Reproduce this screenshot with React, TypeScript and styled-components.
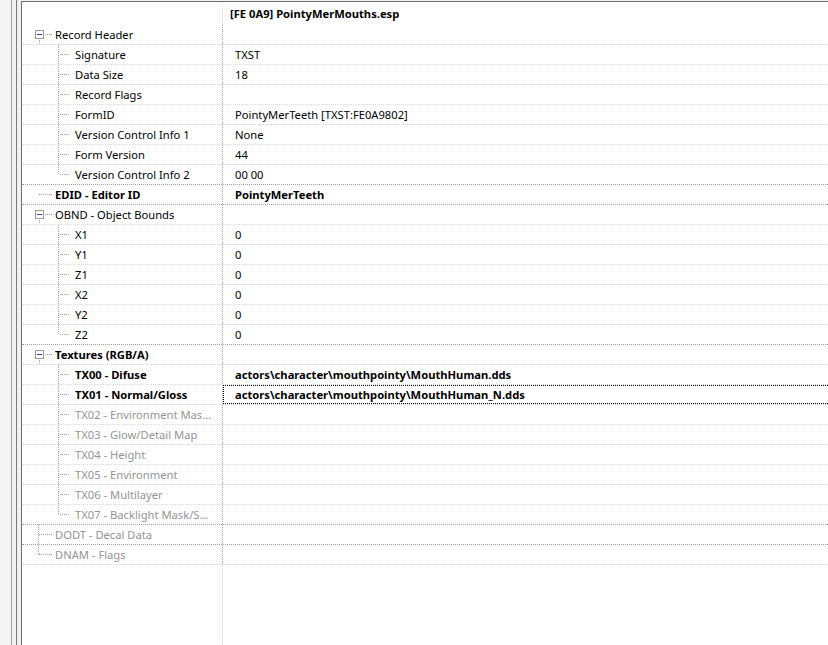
import React from 'react'
import styled, { createGlobalStyle } from 'styled-components'

const GlobalStyle = createGlobalStyle`
  html, body {
    margin: 0;
    padding: 0;
    height: 100%;
    overflow: hidden;
    background: #f0f0f0;
  }
  #root {
    height: 100%;
  }
`

// a little wider than the window: the grid runs off the right edge
const AppWrapper = styled.div`
  display: flex;
  height: 645px;
  width: 832px;
  font-family: 'Noto Sans', 'Open Sans', sans-serif;
  font-size: 11.2px;
  color: #000;
`

// splitter strip on the left edge
const Gutter = styled.div`
  display: flex;
  flex-shrink: 0;
  width: 21px;
  background: #f0f0f0;
`

const GutterPart = styled.div<{ $w: number; $c: string }>`
  width: ${({ $w }) => $w}px;
  background: ${({ $c }) => $c};
`

const Panel = styled.div`
  flex: 1;
  display: flex;
  flex-direction: column;
  margin-top: 1px;
  background: #fff;
  border-left: 1px solid #6e6e6e;
  border-top: 1px solid #6e6e6e;
  overflow: hidden;
`

const HeaderRow = styled.div`
  display: flex;
  height: 23px;
  flex-shrink: 0;
`

const Row = styled.div<{ $sep: 'light' | 'dark' }>`
  display: flex;
  height: 20px;
  flex-shrink: 0;
  box-sizing: border-box;
  border-bottom: 1px dotted ${({ $sep }) => ($sep === 'dark' ? '#a0a0a0' : '#dcdcdc')};
`

const NameCell = styled.div<{ $light?: boolean }>`
  display: flex;
  align-items: center;
  width: 201px;
  flex-shrink: 0;
  box-sizing: border-box;
  border-right: 1px dotted ${({ $light }) => ($light ? '#dcdcdc' : '#a0a0a0')};
  white-space: nowrap;
  overflow: hidden;
`

const Label = styled.span<{ $bold?: boolean; $disabled?: boolean }>`
  font-weight: ${({ $bold }) => ($bold ? 700 : 400)};
  color: ${({ $disabled }) => ($disabled ? '#949494' : '#000')};
  line-height: 19px;
`

const ValueCell = styled.div<{ $bold?: boolean; $focused?: boolean; $pad?: number }>`
  flex: 1;
  display: flex;
  align-items: center;
  padding-left: ${({ $pad }) => $pad ?? 12}px;
  font-weight: ${({ $bold }) => ($bold ? 700 : 400)};
  line-height: 19px;
  white-space: nowrap;
  ${({ $focused }) => ($focused ? 'outline: 1px dotted #000; outline-offset: -1px;' : '')}
`

const Filler = styled.div`
  flex: 1;
  display: flex;
`

type Guide = 'box' | 'dash' | 'tee' | 'corner' | 'child' | 'childLast'

type Item = {
  label: string
  value?: string
  guide: Guide
  bold?: boolean
  valueBold?: boolean
  disabled?: boolean
  sep?: 'light' | 'dark'
  focused?: boolean
}

const items: Item[] = [
  { label: 'Record Header', guide: 'box' },
  { label: 'Signature', value: 'TXST', guide: 'child' },
  { label: 'Data Size', value: '18', guide: 'child' },
  { label: 'Record Flags', guide: 'child' },
  { label: 'FormID', value: 'PointyMerTeeth [TXST:FE0A9802]', guide: 'child' },
  { label: 'Version Control Info 1', value: 'None', guide: 'child' },
  { label: 'Form Version', value: '44', guide: 'child' },
  { label: 'Version Control Info 2', value: '00 00', guide: 'childLast', sep: 'dark' },
  { label: 'EDID - Editor ID', value: 'PointyMerTeeth', guide: 'dash', bold: true, valueBold: true, sep: 'dark' },
  { label: 'OBND - Object Bounds', guide: 'box' },
  { label: 'X1', value: '0', guide: 'child' },
  { label: 'Y1', value: '0', guide: 'child' },
  { label: 'Z1', value: '0', guide: 'child' },
  { label: 'X2', value: '0', guide: 'child' },
  { label: 'Y2', value: '0', guide: 'child' },
  { label: 'Z2', value: '0', guide: 'childLast', sep: 'dark' },
  { label: 'Textures (RGB/A)', guide: 'box', bold: true },
  { label: 'TX00 - Difuse', value: 'actors\\character\\mouthpointy\\MouthHuman.dds', guide: 'child', bold: true, valueBold: true },
  { label: 'TX01 - Normal/Gloss', value: 'actors\\character\\mouthpointy\\MouthHuman_N.dds', guide: 'child', bold: true, valueBold: true, focused: true },
  { label: 'TX02 - Environment Mas...', guide: 'child', disabled: true },
  { label: 'TX03 - Glow/Detail Map', guide: 'child', disabled: true },
  { label: 'TX04 - Height', guide: 'child', disabled: true },
  { label: 'TX05 - Environment', guide: 'child', disabled: true },
  { label: 'TX06 - Multilayer', guide: 'child', disabled: true },
  { label: 'TX07 - Backlight Mask/S...', guide: 'childLast', disabled: true, sep: 'dark' },
  { label: 'DODT - Decal Data', guide: 'tee', disabled: true, sep: 'dark' },
  { label: 'DNAM - Flags', guide: 'corner', disabled: true },
]

const LINE = '#a0a0a0'

// tree connector lines drawn for one row
function TreeGuide({ guide }: { guide: Guide }) {
  const child = guide === 'child' || guide === 'childLast'
  const w = child ? 53 : 33
  return (
    <svg width={w} height={19} style={{ flexShrink: 0, display: 'block' }}>
      {guide === 'box' && (
        <>
          <rect x={13.5} y={5.5} width={8} height={8} fill="#fff" stroke="#9a9a9a" />
          <line x1={15} y1={9.5} x2={20} y2={9.5} stroke="#2b4fa0" />
          <line x1={17.5} y1={15} x2={17.5} y2={19} stroke={LINE} strokeDasharray="1 1" />
          <line x1={23} y1={9.5} x2={31} y2={9.5} stroke={LINE} strokeDasharray="1 1" />
        </>
      )}
      {(guide === 'dash' || guide === 'tee' || guide === 'corner') && (
        <line x1={17} y1={9.5} x2={30} y2={9.5} stroke={LINE} strokeDasharray="1 1" />
      )}
      {guide === 'tee' && <line x1={16.5} y1={0} x2={16.5} y2={19} stroke={LINE} strokeDasharray="1 1" />}
      {guide === 'corner' && <line x1={16.5} y1={0} x2={16.5} y2={10} stroke={LINE} strokeDasharray="1 1" />}
      {child && (
        <>
          <line
            x1={36.5}
            y1={0}
            x2={36.5}
            y2={guide === 'child' ? 19 : 10}
            stroke={LINE}
            strokeDasharray="1 1"
          />
          <line x1={38} y1={9.5} x2={47} y2={9.5} stroke={LINE} strokeDasharray="1 1" />
        </>
      )}
    </svg>
  )
}

function App() {
  return (
    <>
      <GlobalStyle />
      <AppWrapper>
        <Gutter>
          <GutterPart $w={11} $c="#f4f4f4" />
          <GutterPart $w={1} $c="#a0a0a0" />
          <GutterPart $w={4} $c="#f0f0f0" />
          <GutterPart $w={1} $c="#7a7a7a" />
          <GutterPart $w={4} $c="#f0f0f0" />
        </Gutter>
        <Panel>
          <HeaderRow>
            <NameCell $light />
            <ValueCell $bold $pad={7}>
              [FE 0A9] PointyMerMouths.esp
            </ValueCell>
          </HeaderRow>
          {items.map((it) => (
            <Row key={it.label} $sep={it.sep ?? 'light'}>
              <NameCell>
                <TreeGuide guide={it.guide} />
                <Label $bold={it.bold} $disabled={it.disabled}>
                  {it.label}
                </Label>
              </NameCell>
              <ValueCell $bold={it.valueBold} $focused={it.focused}>
                {it.value}
              </ValueCell>
            </Row>
          ))}
          <Filler>
            <NameCell $light />
          </Filler>
        </Panel>
      </AppWrapper>
    </>
  )
}

export default App
